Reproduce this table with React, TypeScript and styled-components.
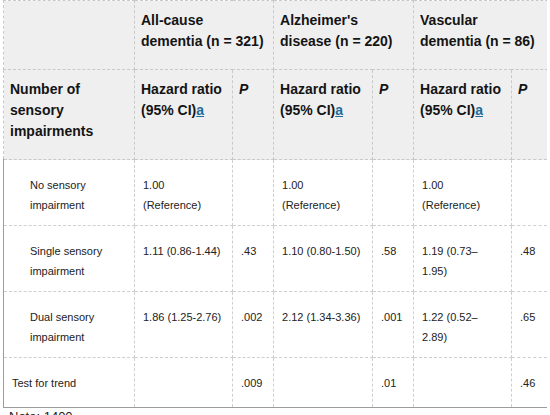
import React from 'react';
import styled, { createGlobalStyle } from 'styled-components';

const GlobalStyle = createGlobalStyle`
  body {
    margin: 0;
    background: #ffffff;
    font-family: "Liberation Sans", Arial, sans-serif;
    color: #222;
  }
`;

const Wrapper = styled.div`
  padding-left: 3px;
  width: 544px;
  height: 415px;
  overflow: hidden;
`;

const Table = styled.table`
  border-collapse: collapse;
  table-layout: fixed;
  width: 544px;
`;

const Col = styled.col<{ $w: number }>`
  width: ${p => p.$w}px;
`;

const HeadCell = styled.th<{ $italic?: boolean }>`
  background: #efefef;
  border: 1px dashed #c9c9c9;
  padding: 9px 6px 17px;
  text-align: left;
  vertical-align: top;
  font-size: 14px;
  line-height: 21px;
  font-weight: 700;
  color: #141414;
  font-style: ${p => (p.$italic ? 'italic' : 'normal')};
`;

const FootLink = styled.a`
  color: #1f6b99;
  text-decoration: underline;
`;

const BodyRow = styled.tr`
  & > td:first-child {
    border-left: 1px solid #9c9c9c;
  }
  & > td:last-child {
    border-right: 1px solid #9c9c9c;
  }
  &:last-child > td {
    border-bottom: 1px solid #9c9c9c;
    padding-bottom: 14px;
  }
`;

const Cell = styled.td<{ $indent?: boolean }>`
  border: 1px dashed #cfcfcf;
  padding: 15px 8px 10px ${p => (p.$indent ? '26px' : '8px')};
  vertical-align: top;
  font-size: 11px;
  line-height: 20px;
  color: #222;
`;

const Note = styled.div`
  padding-left: 6px;
  font-size: 13px;
  line-height: 18px;
  color: #222;
`;

type Result = { hr: React.ReactNode; p: string };

const widths = [131, 98, 41, 99, 41, 98, 36];

const rows: { label: string; indent: boolean; results: Result[] }[] = [
  {
    label: 'No sensory impairment',
    indent: true,
    results: [
      { hr: <>1.00<br />(Reference)</>, p: '' },
      { hr: <>1.00<br />(Reference)</>, p: '' },
      { hr: <>1.00<br />(Reference)</>, p: '' },
    ],
  },
  {
    label: 'Single sensory impairment',
    indent: true,
    results: [
      { hr: '1.11 (0.86-1.44)', p: '.43' },
      { hr: '1.10 (0.80-1.50)', p: '.58' },
      { hr: <>1.19 (0.73–<br />1.95)</>, p: '.48' },
    ],
  },
  {
    label: 'Dual sensory impairment',
    indent: true,
    results: [
      { hr: '1.86 (1.25-2.76)', p: '.002' },
      { hr: '2.12 (1.34-3.36)', p: '.001' },
      { hr: <>1.22 (0.52–<br />2.89)</>, p: '.65' },
    ],
  },
  {
    label: 'Test for trend',
    indent: false,
    results: [
      { hr: '', p: '.009' },
      { hr: '', p: '.01' },
      { hr: '', p: '.46' },
    ],
  },
];

const groups = [
  ['All-cause', 'dementia (n = 321)'],
  ["Alzheimer's", 'disease (n = 220)'],
  ['Vascular', 'dementia (n = 86)'],
];

const App: React.FC = () => {
  return (
    <>
      <GlobalStyle />
      <Wrapper>
        <Table>
          <colgroup>
            {widths.map((w, i) => (
              <Col key={i} $w={w} />
            ))}
          </colgroup>
          <thead>
            <tr>
              <HeadCell />
              {groups.map(g => (
                <HeadCell key={g[0]} colSpan={2}>
                  {g[0]}
                  <br />
                  {g[1]}
                </HeadCell>
              ))}
            </tr>
            <tr>
              <HeadCell>Number of sensory impairments</HeadCell>
              {groups.map(g => (
                <React.Fragment key={g[0]}>
                  <HeadCell>
                    Hazard ratio
                    <br />
                    (95% CI)<FootLink href="#">a</FootLink>
                  </HeadCell>
                  <HeadCell $italic>P</HeadCell>
                </React.Fragment>
              ))}
            </tr>
          </thead>
          <tbody>
            {rows.map(r => (
              <BodyRow key={r.label}>
                <Cell $indent={r.indent}>{r.label}</Cell>
                {r.results.map((res, i) => (
                  <React.Fragment key={i}>
                    <Cell>{res.hr}</Cell>
                    <Cell>{res.p}</Cell>
                  </React.Fragment>
                ))}
              </BodyRow>
            ))}
          </tbody>
        </Table>
        <Note>Note: 1400</Note>
      </Wrapper>
    </>
  );
};

export default App;
